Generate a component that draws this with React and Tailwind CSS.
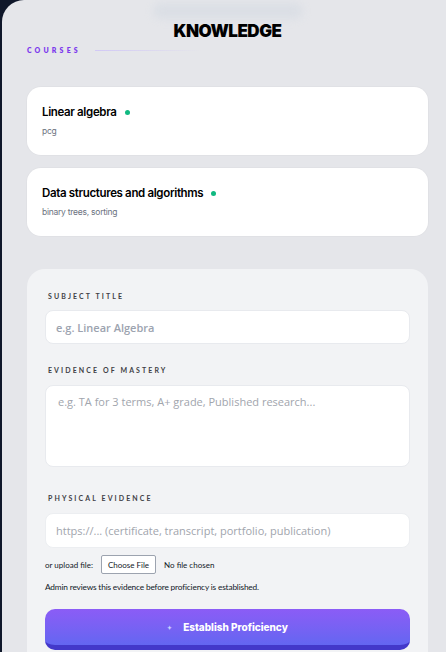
import { useState } from "react";

const courses = [
  { name: "Linear algebra", note: "pcg" },
  { name: "Data structures and algorithms", note: "binary trees, sorting" },
];

const Label = ({ children }) => (
  <div className="text-[7px] leading-[11px] font-bold tracking-[0.3em] text-[#3f3f46] pl-[3px]" style={{ fontFamily: "Lato, sans-serif" }}>
    {children}
  </div>
);

export default function App() {
  const [title, setTitle] = useState("");
  const [evidence, setEvidence] = useState("");
  const [link, setLink] = useState("");

  return (
    <div className="min-h-screen bg-[#0f172a] pl-[2px]" style={{ fontFamily: "Inter, sans-serif" }}>
      <div className="min-h-screen bg-[#e5e6ea] rounded-tl-[22px] pl-[25px] pr-[18px] pt-[21px]">
        {/* Header */}
        <div className="relative flex justify-center">
          <div className="absolute -top-[18px] w-[150px] h-[16px] rounded-full bg-[#d4dae2] opacity-60 blur-[4px]" />
          <h1 className="relative text-[17px] leading-[20px] font-black text-black tracking-[-0.03em]">KNOWLEDGE</h1>
        </div>

        <div className="flex items-center gap-[14px] mt-[2px] h-[14px]">
          <span className="text-[7px] font-extrabold tracking-[0.45em] text-[#7c3aed]" style={{ fontFamily: "Lato, sans-serif" }}>
            COURSES
          </span>
          <div className="h-px w-[106px] bg-gradient-to-r from-[#c4b5fd]/60 to-transparent" />
        </div>

        {/* Course cards */}
        <div className="flex flex-col gap-[13px] mt-[30px]">
          {courses.map((c) => (
            <div key={c.name} className="h-[68px] bg-white rounded-[14px] px-[15px] pt-[18px] shadow-[0_0_0_1px_rgba(0,0,0,0.02)]">
              <div className="flex items-center gap-[8px]">
                <span className="text-[11.5px] leading-[15px] font-semibold text-black tracking-[-0.03em]">{c.name}</span>
                <span className="w-[5px] h-[5px] rounded-full bg-[#10b981]" />
              </div>
              <div className="text-[8.5px] text-[#6b7280] mt-[5px] tracking-[-0.03em]">{c.note}</div>
            </div>
          ))}
        </div>

        {/* Form */}
        <div className="mt-[33px] bg-[#f2f3f5] rounded-[18px] px-[18px] pt-[22px] pb-[20px]">
          <Label>SUBJECT TITLE</Label>
          <input
            value={title}
            onChange={(e) => setTitle(e.target.value)}
            placeholder="e.g. Linear Algebra"
            className="mt-[8px] w-full h-[34px] rounded-[8px] bg-white border border-[#e8eaee] px-[10px] text-[11px] font-semibold placeholder:text-[#9ca3af] outline-none"
            style={{ fontFamily: "'Open Sans', sans-serif" }}
          />

          <div className="mt-[21px]">
            <Label>EVIDENCE OF MASTERY</Label>
          </div>
          <textarea
            value={evidence}
            onChange={(e) => setEvidence(e.target.value)}
            placeholder="e.g. TA for 3 terms, A+ grade, Published research..."
            className="block mt-[9px] w-full h-[82px] resize-none rounded-[8px] bg-white border border-[#e8eaee] px-[12px] py-[8px] text-[11px] placeholder:text-[#a1a5ad] outline-none"
            style={{ fontFamily: "'Open Sans', sans-serif" }}
          />

          <div className="mt-[26px]">
            <Label>PHYSICAL EVIDENCE</Label>
          </div>
          <input
            value={link}
            onChange={(e) => setLink(e.target.value)}
            placeholder="https://... (certificate, transcript, portfolio, publication)"
            className="mt-[9px] w-full h-[35px] rounded-[8px] bg-white border border-[#eceef1] px-[10px] text-[11px] placeholder:text-[#a1a5ad] outline-none"
            style={{ fontFamily: "'Open Sans', sans-serif" }}
          />

          <div className="flex items-center mt-[7px] text-[8px] text-[#111827]" style={{ fontFamily: "Lato, sans-serif" }}>
            <span>or upload file:</span>
            <span className="ml-[8px] h-[19px] px-[6px] flex items-center border border-[#9ca3af] rounded-[2px] bg-white text-[8px]">
              Choose File
            </span>
            <span className="ml-[8px]">No file chosen</span>
          </div>

          <div className="mt-[7px] text-[8.3px] text-[#111827] tracking-[-0.02em]" style={{ fontFamily: "Lato, sans-serif" }}>
            Admin reviews this evidence before proficiency is established.
          </div>

          <button className="mt-[16px] w-full h-[41px] rounded-[10px] bg-gradient-to-b from-[#8b5cf6] to-[#6366f1] border-b-[5px] border-[#4338ca] flex items-center justify-center gap-[11px] text-white text-[10px] font-extrabold">
            <span className="text-[6px] text-[#c7d2fe]">✦</span>
            <span>Establish Proficiency</span>
          </button>
        </div>
      </div>
    </div>
  );
}
